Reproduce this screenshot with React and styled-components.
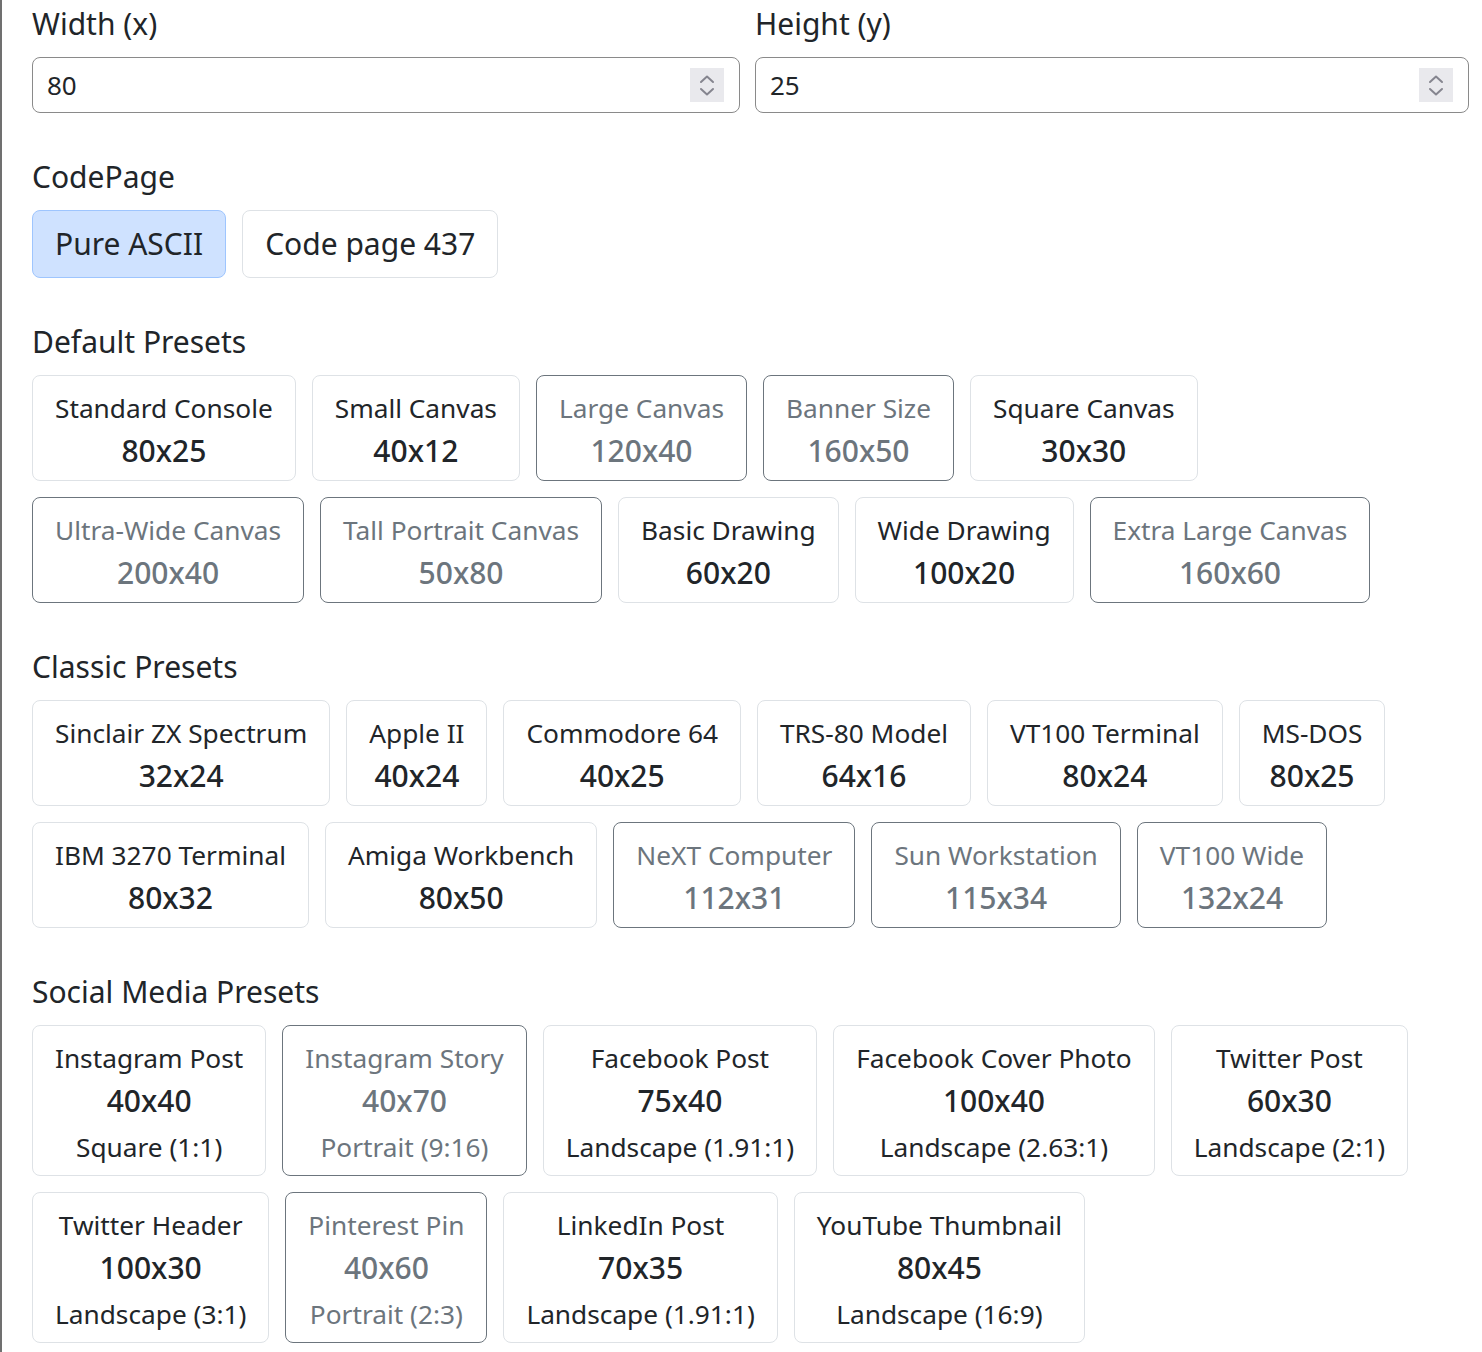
import React, { useState } from 'react'
import styled, { createGlobalStyle } from 'styled-components'

const GlobalStyle = createGlobalStyle`
  html, body {
    margin: 0;
    padding: 0;
    background: #fff;
  }
  body {
    font-family: 'Noto Sans', 'Open Sans', sans-serif;
    color: #212529;
  }
  * {
    box-sizing: border-box;
  }
`

const defaultPresets = [
  { name: 'Standard Console', w: 80, h: 25 },
  { name: 'Small Canvas', w: 40, h: 12 },
  { name: 'Large Canvas', w: 120, h: 40, muted: true },
  { name: 'Banner Size', w: 160, h: 50, muted: true },
  { name: 'Square Canvas', w: 30, h: 30 },
  { name: 'Ultra-Wide Canvas', w: 200, h: 40, muted: true },
  { name: 'Tall Portrait Canvas', w: 50, h: 80, muted: true },
  { name: 'Basic Drawing', w: 60, h: 20 },
  { name: 'Wide Drawing', w: 100, h: 20 },
  { name: 'Extra Large Canvas', w: 160, h: 60, muted: true },
]

const classicPresets = [
  { name: 'Sinclair ZX Spectrum', w: 32, h: 24 },
  { name: 'Apple II', w: 40, h: 24 },
  { name: 'Commodore 64', w: 40, h: 25 },
  { name: 'TRS-80 Model', w: 64, h: 16 },
  { name: 'VT100 Terminal', w: 80, h: 24 },
  { name: 'MS-DOS', w: 80, h: 25 },
  { name: 'IBM 3270 Terminal', w: 80, h: 32 },
  { name: 'Amiga Workbench', w: 80, h: 50 },
  { name: 'NeXT Computer', w: 112, h: 31, muted: true },
  { name: 'Sun Workstation', w: 115, h: 34, muted: true },
  { name: 'VT100 Wide', w: 132, h: 24, muted: true },
]

const socialPresets = [
  { name: 'Instagram Post', w: 40, h: 40, desc: 'Square (1:1)' },
  { name: 'Instagram Story', w: 40, h: 70, desc: 'Portrait (9:16)', muted: true },
  { name: 'Facebook Post', w: 75, h: 40, desc: 'Landscape (1.91:1)' },
  { name: 'Facebook Cover Photo', w: 100, h: 40, desc: 'Landscape (2.63:1)' },
  { name: 'Twitter Post', w: 60, h: 30, desc: 'Landscape (2:1)' },
  { name: 'Twitter Header', w: 100, h: 30, desc: 'Landscape (3:1)' },
  { name: 'Pinterest Pin', w: 40, h: 60, desc: 'Portrait (2:3)', muted: true },
  { name: 'LinkedIn Post', w: 70, h: 35, desc: 'Landscape (1.91:1)' },
  { name: 'YouTube Thumbnail', w: 80, h: 45, desc: 'Landscape (16:9)' },
]

const NumberField = ({ label, value, onChange }) => {
  return (
    <Field>
      <Label>{label}</Label>
      <InputBox>
        <Input value={value} onChange={(e) => onChange(e.target.value)} />
        <Spinner>
          <svg width='16' height='26' viewBox='0 0 16 26' fill='none'>
            <path d='M2 10 L8 4.5 L14 10' stroke='#85858f' strokeWidth='2' strokeLinecap='round' strokeLinejoin='round' />
            <path d='M2 17 L8 22.5 L14 17' stroke='#85858f' strokeWidth='2' strokeLinecap='round' strokeLinejoin='round' />
          </svg>
        </Spinner>
      </InputBox>
    </Field>
  )
}

const PresetGroup = ({ title, items }) => {
  return (
    <Section>
      <Heading>{title}</Heading>
      <CardList>
        {items.map((item) => {
          return (
            <PresetCard key={item.name} $muted={item.muted}>
              <CardTitle>{item.name}</CardTitle>
              <CardSize>
                {item.w}x{item.h}
              </CardSize>
              {item.desc && <CardDesc>{item.desc}</CardDesc>}
            </PresetCard>
          )
        })}
      </CardList>
    </Section>
  )
}

const App = () => {
  const [width, setWidth] = useState('80')
  const [height, setHeight] = useState('25')
  const [codePage, setCodePage] = useState('ascii')

  return (
    <>
      <GlobalStyle />
      <Wrapper>
        <FieldRow>
          <NumberField label='Width (x)' value={width} onChange={setWidth} />
          <NumberField label='Height (y)' value={height} onChange={setHeight} />
        </FieldRow>

        {/* ===== code page */}
        <Section>
          <Heading>CodePage</Heading>
          <ToggleRow>
            <ToggleButton $active={codePage === 'ascii'} onClick={() => setCodePage('ascii')}>
              Pure ASCII
            </ToggleButton>
            <ToggleButton $active={codePage === '437'} onClick={() => setCodePage('437')}>
              Code page 437
            </ToggleButton>
          </ToggleRow>
        </Section>

        <PresetGroup title='Default Presets' items={defaultPresets} />
        <PresetGroup title='Classic Presets' items={classicPresets} />
        <PresetGroup title='Social Media Presets' items={socialPresets} />
      </Wrapper>
    </>
  )
}

const Wrapper = styled.div`
  border-left: 2px solid #707070;
  padding: 4px 13px 40px 30px;
`

const FieldRow = styled.div`
  display: grid;
  grid-template-columns: 708px 1fr;
  gap: 15px;
  margin-bottom: 1px;
`

const Field = styled.div`
  display: flex;
  flex-direction: column;
`

const Label = styled.label`
  font-size: 30px;
  line-height: 40px;
  margin-bottom: 13px;
`

const InputBox = styled.div`
  display: flex;
  align-items: center;
  height: 56px;
  border: 1px solid #8a8a8a;
  border-radius: 8px;
  padding: 0 15px 0 14px;
`

const Input = styled.input`
  flex: 1;
  min-width: 0;
  border: none;
  outline: none;
  background: transparent;
  font-family: inherit;
  font-size: 26px;
  color: #212529;
  padding: 0;
`

const Spinner = styled.div`
  width: 34px;
  height: 34px;
  background: #e9e9ed;
  display: flex;
  align-items: center;
  justify-content: center;
`

const Section = styled.section`
  margin-top: 44px;
`

const Heading = styled.h5`
  margin: 0 0 13px;
  font-size: 30px;
  line-height: 40px;
  font-weight: 400;
`

const ToggleRow = styled.div`
  display: flex;
  gap: 16px;
`

const ToggleButton = styled.button`
  font-family: inherit;
  font-size: 30px;
  line-height: 46px;
  padding: 10px 22px;
  border-radius: 8px;
  color: #212529;
  cursor: pointer;
  background: ${(p) => (p.$active ? '#cfe2ff' : '#fff')};
  border: 1px solid ${(p) => (p.$active ? '#9ec5fe' : '#dee2e6')};
`

const CardList = styled.div`
  display: flex;
  flex-wrap: wrap;
  gap: 16px;
`

const PresetCard = styled.div`
  display: flex;
  flex-direction: column;
  align-items: center;
  padding: 13px 22px 9px;
  border-radius: 8px;
  border: 1px solid ${(p) => (p.$muted ? '#6c757d' : '#dee2e6')};
  color: ${(p) => (p.$muted ? '#6c757d' : '#212529')};
  cursor: pointer;
`

const CardTitle = styled.div`
  font-size: 26.25px;
  line-height: 38px;
`

const CardSize = styled.div`
  font-size: 30px;
  line-height: 40px;
  font-weight: 500;
  margin-top: 4px;
`

const CardDesc = styled.div`
  font-size: 26.25px;
  line-height: 38px;
  margin-top: 7px;
`

export default App
